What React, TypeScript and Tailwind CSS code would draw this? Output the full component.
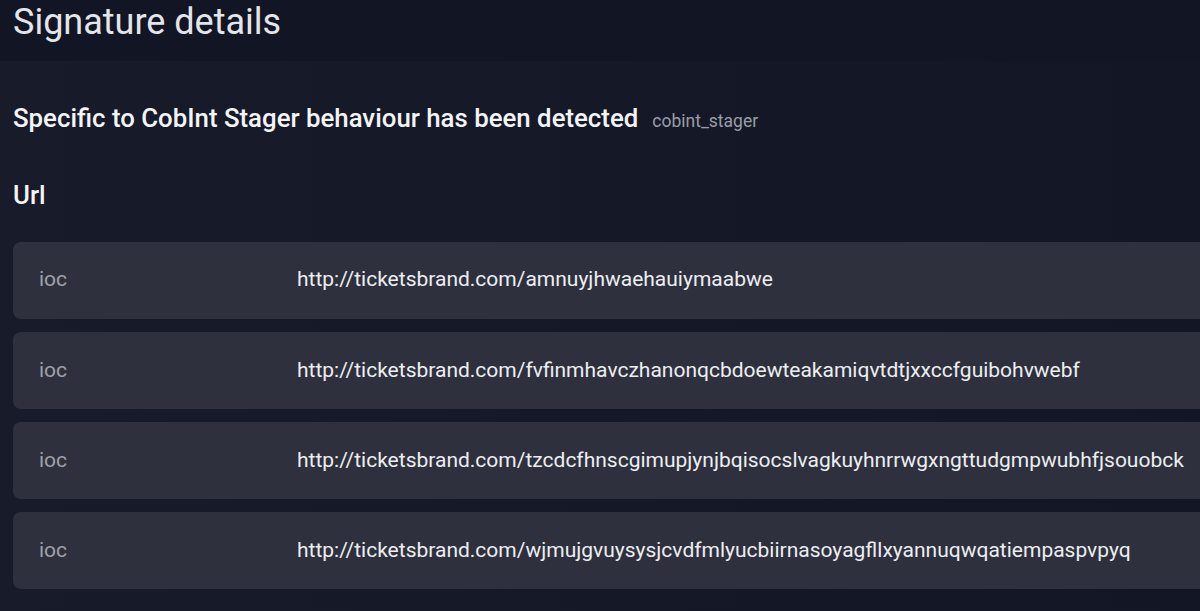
import React from "react";

const urls = [
  "http://ticketsbrand.com/amnuyjhwaehauiymaabwe",
  "http://ticketsbrand.com/fvfinmhavczhanonqcbdoewteakamiqvtdtjxxccfguibohvwebf",
  "http://ticketsbrand.com/tzcdcfhnscgimupjynjbqisocslvagkuyhnrrwgxngttudgmpwubhfjsouobck",
  "http://ticketsbrand.com/wjmujgvuysysjcvdfmlyucbiirnasoyagfllxyannuqwqatiempaspvpyq",
];

export default function App() {
  return (
    <div className="w-[1200px] h-[611px] overflow-hidden flex flex-col font-['Roboto',sans-serif]">
      <div className="h-[61px] shrink-0 bg-[#111524] flex items-start px-[13px]">
        <h1 className="text-[36px] leading-none mt-[4px] text-[#e3e5ea] font-normal whitespace-nowrap">Signature details</h1>
      </div>
      <div className="flex-1 bg-gradient-to-r from-[#181b29] to-[#121625] pl-[13px] flex flex-col">
        <div className="mt-[45px] flex items-baseline gap-[14px] whitespace-nowrap leading-none">
          <span className="text-[25.8px] font-medium text-[#f3f4f6]">Specific to CobInt Stager behaviour has been detected</span>
          <span className="text-[17.5px] text-[#9a9ea8]">cobint_stager</span>
        </div>
        <div className="mt-[51px] text-[25.8px] font-medium text-[#f3f4f6] leading-none">Url</div>
        <div className="mt-[33px] flex flex-col gap-[13.3px] w-[1200px]">
          {urls.map((u) => (
            <div key={u} className="h-[77px] rounded-[8px] bg-[#2e313d] flex items-center text-[21px] whitespace-nowrap">
              <span className="w-[284px] pl-[26px] text-[#9ea1a9]">ioc</span>
              <span className="text-[#eceef2]">{u}</span>
            </div>
          ))}
        </div>
      </div>
    </div>
  );
}
